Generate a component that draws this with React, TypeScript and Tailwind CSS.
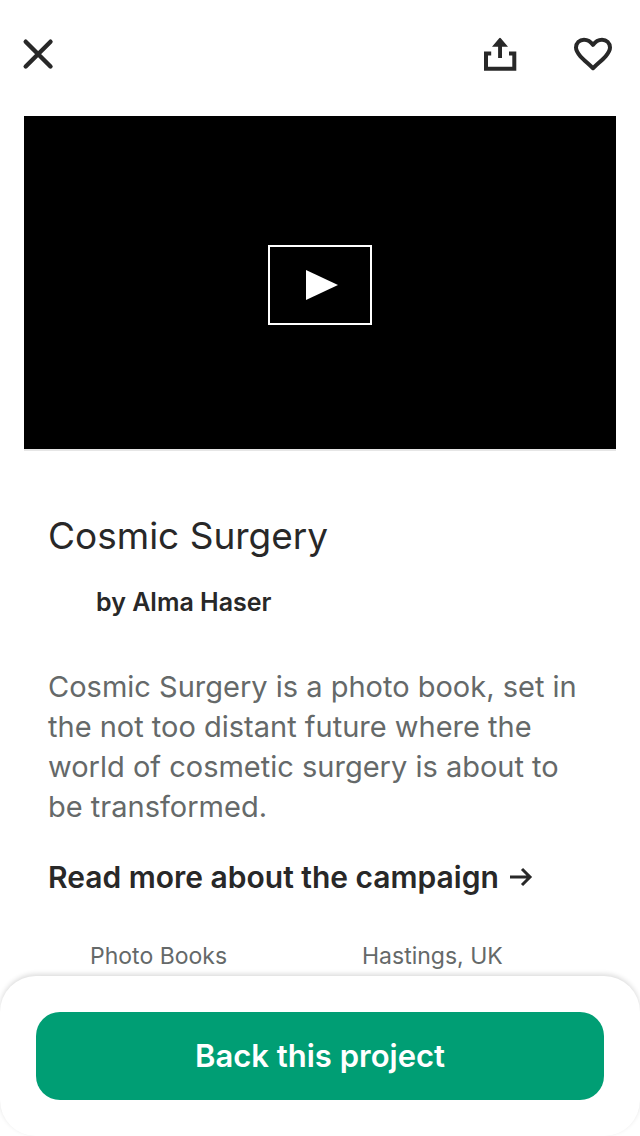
const CloseIcon = () => (
  <svg viewBox="0 0 44 44" className="size-11" fill="none" stroke="currentColor" strokeWidth="4.400" strokeLinecap="round" aria-hidden="true">
    <path d="M9.700 9.700 34.500 34.500M34.500 9.700 9.700 34.500" />
  </svg>
);

const ShareIcon = () => (
  <svg viewBox="0 0 44 44" className="size-11" aria-hidden="true">
    <path d="M13.200 21.500H8V36.700H36.300V21.500H31" fill="none" stroke="currentColor" strokeWidth="4" />
    <path d="M20.100 26V14.800H14L21.200 6.200Q22 5.300 22.800 6.200L30 14.800H24V26Z" fill="currentColor" />
  </svg>
);

const HeartIcon = () => (
  <svg viewBox="0 0 44 44" className="size-11" fill="none" stroke="currentColor" strokeWidth="4" strokeLinejoin="round" aria-hidden="true">
    <path d="M22 36.200C17 31.400 12.800 28 9.400 24.300C6.700 21.300 5 18.800 5 15.600C5 11 8.500 7.700 13 7.700C17 7.700 19.800 9.700 22 12.900C24.200 9.700 27 7.700 31 7.700C35.500 7.700 39 11 39 15.600C39 18.800 37.300 21.300 34.600 24.300C31.200 28 27 31.400 22 36.200Z" />
  </svg>
);

const ArrowIcon = () => (
  <svg viewBox="0 0 24 20" className="h-5 w-6" fill="none" stroke="currentColor" strokeWidth="3" aria-hidden="true">
    <path d="M1 10H21M13 2l8 8-8 8" />
  </svg>
);

export default function App() {
  return (
    <div className="flex min-h-screen flex-col bg-white font-['Inter',sans-serif] text-[#282828]">
      <header className="flex items-center px-4 pt-8 pb-10">
        <button type="button" aria-label="Close">
          <CloseIcon />
        </button>
        <div className="ml-auto flex gap-[49px] pr-[9px]">
          <button type="button" aria-label="Share">
            <ShareIcon />
          </button>
          <button type="button" aria-label="Save project">
            <HeartIcon />
          </button>
        </div>
      </header>

      <main className="flex-1">
        <div className="mx-6 flex aspect-[592/335] items-center justify-center border-b-2 border-[#e6e6e6] bg-black">
          <button type="button" aria-label="Play video" className="mt-1 flex h-20 w-26 items-center justify-center border-2 border-white text-white">
            <svg viewBox="0 0 32 30" className="ml-1 h-[30px] w-8" fill="currentColor" aria-hidden="true">
              <path d="M0 0 32 15 0 30Z" />
            </svg>
          </button>
        </div>

        <div className="px-12 pt-[60px]">
          <h1 className="text-[37px] leading-[50px]">Cosmic Surgery</h1>
          <p className="mt-[25px] pl-12 text-[25px] leading-8 font-semibold">by Alma Haser</p>
          <p className="mt-[49px] text-[29px] leading-10 text-[#656969]">
            Cosmic Surgery is a photo book, set in the not too distant future where the world of cosmetic surgery is about to be transformed.
          </p>
          <a href="#campaign" className="mt-[30px] flex items-center gap-[10px] text-[30px] leading-10 font-semibold">
            Read more about the campaign
            <ArrowIcon />
          </a>
          <div className="mt-[43px] grid grid-cols-2 text-[23px] leading-8 text-[#656969]">
            <span className="pl-[42px]">Photo Books</span>
            <span className="pl-[42px]">Hastings, UK</span>
          </div>
        </div>
      </main>

      <footer className="sticky bottom-0 rounded-[36px] bg-white p-9 shadow-[0_-2px_5px_rgba(0,0,0,0.14)]">
        <button type="button" className="h-22 w-full rounded-3xl bg-[#009e74] text-[31px] font-semibold text-white">
          Back this project
        </button>
      </footer>
    </div>
  );
}
